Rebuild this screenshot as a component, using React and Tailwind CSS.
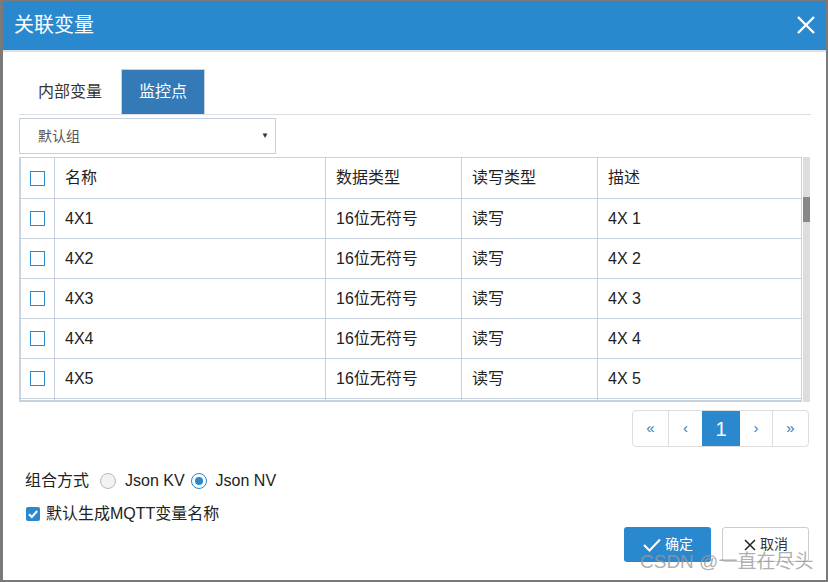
import { useState } from "react";

const rows = [
  { name: "4X1", type: "16位无符号", rw: "读写", desc: "4X 1" },
  { name: "4X2", type: "16位无符号", rw: "读写", desc: "4X 2" },
  { name: "4X3", type: "16位无符号", rw: "读写", desc: "4X 3" },
  { name: "4X4", type: "16位无符号", rw: "读写", desc: "4X 4" },
  { name: "4X5", type: "16位无符号", rw: "读写", desc: "4X 5" },
];

const cols = "grid grid-cols-[34px_271px_136px_136px_1fr]";

function Box() {
  return <span className="block w-[15px] h-[15px] border border-[#2a88cf] bg-white" />;
}

function Row({ cells, header, stub }) {
  const h = header ? "h-[41px]" : stub ? "h-[4px]" : "h-[40px]";
  return (
    <div className={`${cols} ${h} ${stub ? "" : "border-b border-[#c8d2dc]"} shrink-0`}>
      <div className="flex items-center justify-center border-r border-[#c8d2dc]">
        {!stub && <Box />}
      </div>
      {cells.map((c, i) => (
        <div
          key={i}
          className={`flex items-center pl-[10px] ${i < 3 ? "border-r border-[#c8d2dc]" : ""}`}
        >
          {c}
        </div>
      ))}
    </div>
  );
}

export default function App() {
  const [tab, setTab] = useState(1);
  const [mode, setMode] = useState("nv");

  return (
    <div
      className="w-[828px] h-[582px] bg-[#7a7a7a] pt-[1px] pl-[3px] overflow-hidden text-[#222]"
      style={{ fontFamily: '"Liberation Sans", "Noto Sans CJK SC", sans-serif' }}
    >
      <div className="relative w-[823px] h-[579px] bg-white flex flex-col">
        {/* header */}
        <div className="h-[51px] bg-[#2a88cf] border-b-2 border-[#dde1e6] flex items-center justify-between pl-[11px] pr-[10px] shrink-0">
          <span className="text-white text-[20px] leading-[24px] mb-[2px]">关联变量</span>
          <svg width="20" height="20" viewBox="0 0 20 20" className="mb-[2px]">
            <path d="M2 2 L18 18 M18 2 L2 18" stroke="#fff" strokeWidth="2.4" />
          </svg>
        </div>

        <div className="pl-[16px] pr-[15px] flex flex-col">
          {/* tabs */}
          <div className="mt-[17px] h-[46px] border-b border-[#dcdfe3] flex items-end">
            <button
              onClick={() => setTab(0)}
              className={`h-[45px] px-[19px] text-[16px] leading-[20px] ${tab === 0 ? "bg-[#337ab7] text-white" : "text-[#333]"}`}
            >
              内部变量
            </button>
            <button
              onClick={() => setTab(1)}
              className={`h-[45px] px-[17px] text-[16px] leading-[20px] border border-b-0 ${tab === 1 ? "bg-[#337ab7] text-white border-[#c8d2dc]" : "text-[#333] border-transparent"}`}
            >
              监控点
            </button>
          </div>

          {/* select */}
          <div className="mt-[3px] w-[257px] h-[36px] border border-[#c5d0dc] flex items-center justify-between pl-[18px] pr-[6px] text-[14px] text-[#555]">
            <span>默认组</span>
            <span className="text-[8px] text-[#333]">▼</span>
          </div>

          {/* table */}
          <div className="mt-[3px] flex h-[245px]">
            <div className="w-[783px] h-[245px] border-l-2 border-r border-t border-b-2 border-[#c8d2dc] overflow-hidden flex flex-col text-[16px]">
              <Row header cells={["名称", "数据类型", "读写类型", "描述"]} />
              {rows.map((r) => (
                <Row key={r.name} cells={[r.name, r.type, r.rw, r.desc]} />
              ))}
              <Row stub cells={["", "", "", ""]} />
            </div>
            <div className="ml-[1px] w-[7px] h-[245px] bg-[#dddddd] pt-[40px]">
              <div className="h-[25px] bg-[#888]" />
            </div>
          </div>

          {/* pagination */}
          <div className="mt-[8px] flex justify-end pr-[2px]">
            <div className="flex h-[37px] border border-[#ddd] rounded-[4px] overflow-hidden text-[15px]">
              <span className="w-[36px] flex items-center justify-center text-[#337ab7] border-r border-[#ddd]">«</span>
              <span className="w-[33px] flex items-center justify-center text-[#337ab7]">‹</span>
              <span className="w-[38px] flex items-center justify-center bg-[#2a88cf] text-white text-[20px]">1</span>
              <span className="w-[33px] flex items-center justify-center text-[#337ab7] border-r border-[#ddd]">›</span>
              <span className="w-[35px] flex items-center justify-center text-[#337ab7]">»</span>
            </div>
          </div>

          {/* options */}
          <div className="mt-[22px] flex items-center h-[24px] text-[16px] pl-[6px]">
            <span>组合方式</span>
            <button onClick={() => setMode("kv")} className="ml-[11px] flex items-center">
              <span className={`w-[16px] h-[16px] rounded-full border flex items-center justify-center ${mode === "kv" ? "border-[#2a88cf] bg-white" : "border-[#b9b9b9] bg-[#f2f2f2]"}`}>
                {mode === "kv" && <span className="w-[8px] h-[8px] rounded-full bg-[#2a88cf]" />}
              </span>
              <span className="ml-[9px]">Json KV</span>
            </button>
            <button onClick={() => setMode("nv")} className="ml-[6px] flex items-center">
              <span className={`w-[16px] h-[16px] rounded-full border flex items-center justify-center ${mode === "nv" ? "border-[#2a88cf] bg-white" : "border-[#b9b9b9] bg-[#f2f2f2]"}`}>
                {mode === "nv" && <span className="w-[8px] h-[8px] rounded-full bg-[#2a88cf]" />}
              </span>
              <span className="ml-[9px]">Json NV</span>
            </button>
          </div>

          <div className="mt-[9px] flex items-center h-[24px] text-[16px] pl-[7px]">
            <span className="w-[14px] h-[14px] bg-[#2a88cf] rounded-[2px] flex items-center justify-center">
              <svg width="12" height="12" viewBox="0 0 12 12">
                <path d="M2 6.2 L4.8 9 L10.2 3" stroke="#fff" strokeWidth="2" fill="none" />
              </svg>
            </span>
            <span className="ml-[6px]">默认生成MQTT变量名称</span>
          </div>

          {/* buttons */}
          <div className="mt-[1px] flex justify-end gap-[11px] pr-[2px]">
            <button className="w-[87px] h-[35px] bg-[#2a88cf] rounded-[3px] text-white text-[14px] flex items-center justify-center">
              <svg width="20" height="16" viewBox="0 0 20 16" className="mr-[3px]">
                <path d="M2 8 L7.5 13.5 L18 2.5" stroke="#fff" strokeWidth="2" fill="none" />
              </svg>
              确定
            </button>
            <button className="w-[87px] h-[35px] bg-white border border-[#ccc] rounded-[3px] text-[#333] text-[14px] flex items-center justify-center">
              <svg width="14" height="14" viewBox="0 0 14 14" className="mr-[3px]">
                <path d="M2 2 L12 12 M12 2 L2 12" stroke="#222" strokeWidth="1.5" />
              </svg>
              取消
            </button>
          </div>
        </div>

        <span className="absolute left-[637px] top-[549px] text-[19px] leading-[24px] text-[#9a9a9a]/80 pointer-events-none">
          CSDN @一直在尽头
        </span>
      </div>
    </div>
  );
}
